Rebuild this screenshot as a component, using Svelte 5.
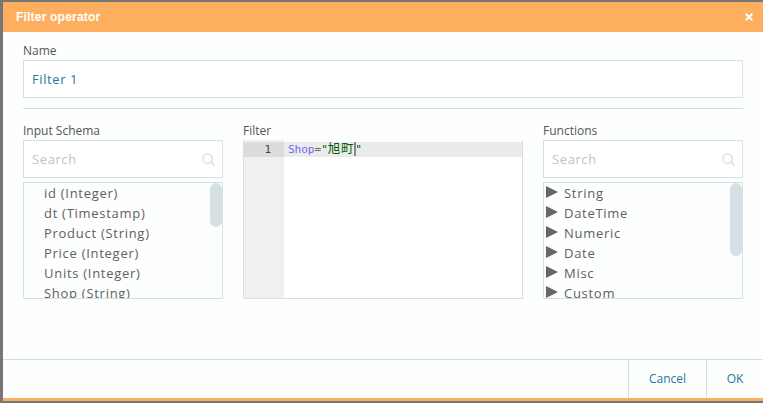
<script lang="ts">
  // Filter operator dialog: name field, schema list, code editor, function tree.
  const schema = ['id (Integer)', 'dt (Timestamp)', 'Product (String)', 'Price (Integer)', 'Units (Integer)', 'Shop (String)'];
  const functions = ['String', 'DateTime', 'Numeric', 'Date', 'Misc', 'Custom'];
</script>

{#snippet searchBox()}
  <div class="search">
    <span class="placeholder">Search</span>
    <svg class="lens" width="13" height="13" viewBox="0 0 15 15" fill="none" stroke="#d5e0e5" stroke-width="1.8">
      <circle cx="6.5" cy="6.5" r="5.4" />
      <path d="M10.4 10.4 14 14" />
    </svg>
  </div>
{/snippet}

<div class="backdrop">
  <div class="dialog">
    <header>
      <h1>Filter operator</h1>
      <svg class="close" width="8" height="8" viewBox="0 0 8 8" stroke="#fff" stroke-width="2">
        <path d="M0.7 0.7 7.3 7.3M7.3 0.7 0.7 7.3" />
      </svg>
    </header>

    <main>
      <label class="field-label" for="name">Name</label>
      <input id="name" class="name" value="Filter 1" />
      <hr />

      <div class="columns">
        <section>
          <div class="field-label">Input Schema</div>
          {@render searchBox()}
          <div class="list">
            <div class="rows">
              {#each schema as item}
                <div class="row schema-row">{item}</div>
              {/each}
            </div>
            <div class="thumb short"></div>
          </div>
        </section>

        <section>
          <div class="field-label">Filter</div>
          <div class="editor">
            <div class="gutter"><div class="line-no">1</div></div>
            <div class="code">
              <div class="code-line"><span class="ident">Shop</span><span class="op">=</span><span class="str">"<span class="cjk">旭町</span></span><span class="cursor"></span><span class="str">"</span></div>
            </div>
          </div>
        </section>

        <section>
          <div class="field-label">Functions</div>
          {@render searchBox()}
          <div class="list">
            <div class="rows">
              {#each functions as item}
                <div class="row fn-row"><span class="arrow"></span>{item}</div>
              {/each}
            </div>
            <div class="thumb long"></div>
          </div>
        </section>
      </div>
    </main>

    <footer>
      <button class="cancel" type="button">Cancel</button>
      <button class="ok" type="button">OK</button>
    </footer>
  </div>
</div>

<style>
  :global(body) {
    margin: 0;
    background: #777;
  }
  .backdrop {
    width: 763px;
    height: 403px;
    padding: 2px 0 2px 3px;
    box-sizing: border-box;
    background: #777;
    overflow: hidden;
  }
  .dialog {
    height: 399px;
    display: flex;
    flex-direction: column;
    background: #fdfefe;
    border-bottom: 3px solid #fdae5e;
    box-sizing: border-box;
    font-family: "Open Sans", "Noto Sans CJK JP", sans-serif;
    font-size: 12px;
    color: #555;
  }
  header {
    height: 30px;
    flex: none;
    display: flex;
    align-items: center;
    justify-content: space-between;
    padding: 0 10px 0 13px;
    background: #fdae5e;
  }
  h1 {
    margin: 0;
    font-family: "Liberation Sans", sans-serif;
    font-size: 12px;
    font-weight: 700;
    letter-spacing: 0.2px;
    color: #fff;
  }
  main {
    flex: 1;
    padding: 10px 20px 0;
  }
  .field-label {
    display: block;
    height: 18px;
    line-height: 17px;
    font-size: 12px;
    color: #555;
  }
  .name {
    display: block;
    width: 100%;
    height: 38px;
    box-sizing: border-box;
    padding: 0 8px;
    border: 1px solid #d5e0e5;
    background: #fff;
    font-family: inherit;
    font-size: 13px;
    letter-spacing: 0.6px;
    color: #24789e;
    outline: none;
  }
  hr {
    height: 1px;
    margin: 10px 0 13px;
    border: 0;
    background: #d5e0e5;
  }
  .columns {
    display: grid;
    grid-template-columns: 200px 280px 200px;
    justify-content: space-between;
  }
  .search {
    height: 38px;
    box-sizing: border-box;
    display: flex;
    align-items: center;
    justify-content: space-between;
    padding: 0 7px 0 8px;
    border: 1px solid #d5e0e5;
    background: #fff;
  }
  .placeholder {
    font-size: 13px;
    letter-spacing: 0.6px;
    color: #bcc4c8;
  }
  .list {
    position: relative;
    height: 117px;
    margin-top: 4px;
    box-sizing: border-box;
    border: 1px solid #d5e0e5;
    overflow: hidden;
  }
  .row {
    height: 20px;
    line-height: 20px;
    font-size: 13px;
    letter-spacing: 0.72px;
    white-space: nowrap;
    color: #606060;
  }
  .schema-row {
    padding-left: 20px;
  }
  .fn-row {
    display: flex;
    align-items: center;
    padding-left: 2px;
  }
  .arrow {
    width: 0;
    height: 0;
    margin: -3px 6px 0 0;
    border-left: 12px solid #666;
    border-top: 6px solid transparent;
    border-bottom: 6px solid transparent;
  }
  .thumb {
    position: absolute;
    top: 0;
    right: 0;
    width: 12px;
    border-radius: 6px;
    background: #d5e0e5;
  }
  .thumb.short {
    height: 44px;
  }
  .thumb.long {
    height: 73px;
  }
  .editor {
    height: 159px;
    box-sizing: border-box;
    display: flex;
    border: 1px solid #d5e0e5;
    border-top: 0;
    font-family: "DejaVu Sans Mono", "Noto Sans CJK JP", monospace;
    font-size: 11px;
  }
  .gutter {
    width: 40px;
    flex: none;
    background: #f0f0f0;
  }
  .line-no {
    height: 15px;
    line-height: 15px;
    margin-top: 2px;
    padding-right: 13px;
    text-align: right;
    background: #dcdcdc;
    color: #444;
  }
  .code {
    flex: 1;
    background: #fff;
  }
  .code-line {
    height: 15px;
    line-height: 14px;
    margin-top: 2px;
    padding-left: 4px;
    background: #ebebeb;
    white-space: nowrap;
  }
  .ident {
    color: #6a6aee;
  }
  .op {
    color: #666;
  }
  .str {
    color: #005a00;
  }
  .cjk {
    font-family: "Noto Sans CJK JP", sans-serif;
    font-size: 12.5px;
    line-height: 1;
    letter-spacing: 0.7px;
  }
  .cursor {
    display: inline-block;
    width: 2px;
    height: 14px;
    margin-right: -1px;
    vertical-align: -3px;
    background: #8a8a8a;
  }
  footer {
    height: 39px;
    flex: none;
    display: flex;
    justify-content: flex-end;
    border-top: 1px solid #d5e0e5;
    box-sizing: border-box;
  }
  button {
    border: 0;
    border-left: 1px solid #d5e0e5;
    background: transparent;
    padding: 0 0 2px;
    font-family: inherit;
    font-size: 12px;
    color: #24789e;
  }
  .cancel {
    width: 78px;
  }
  .ok {
    width: 57px;
  }
</style>
